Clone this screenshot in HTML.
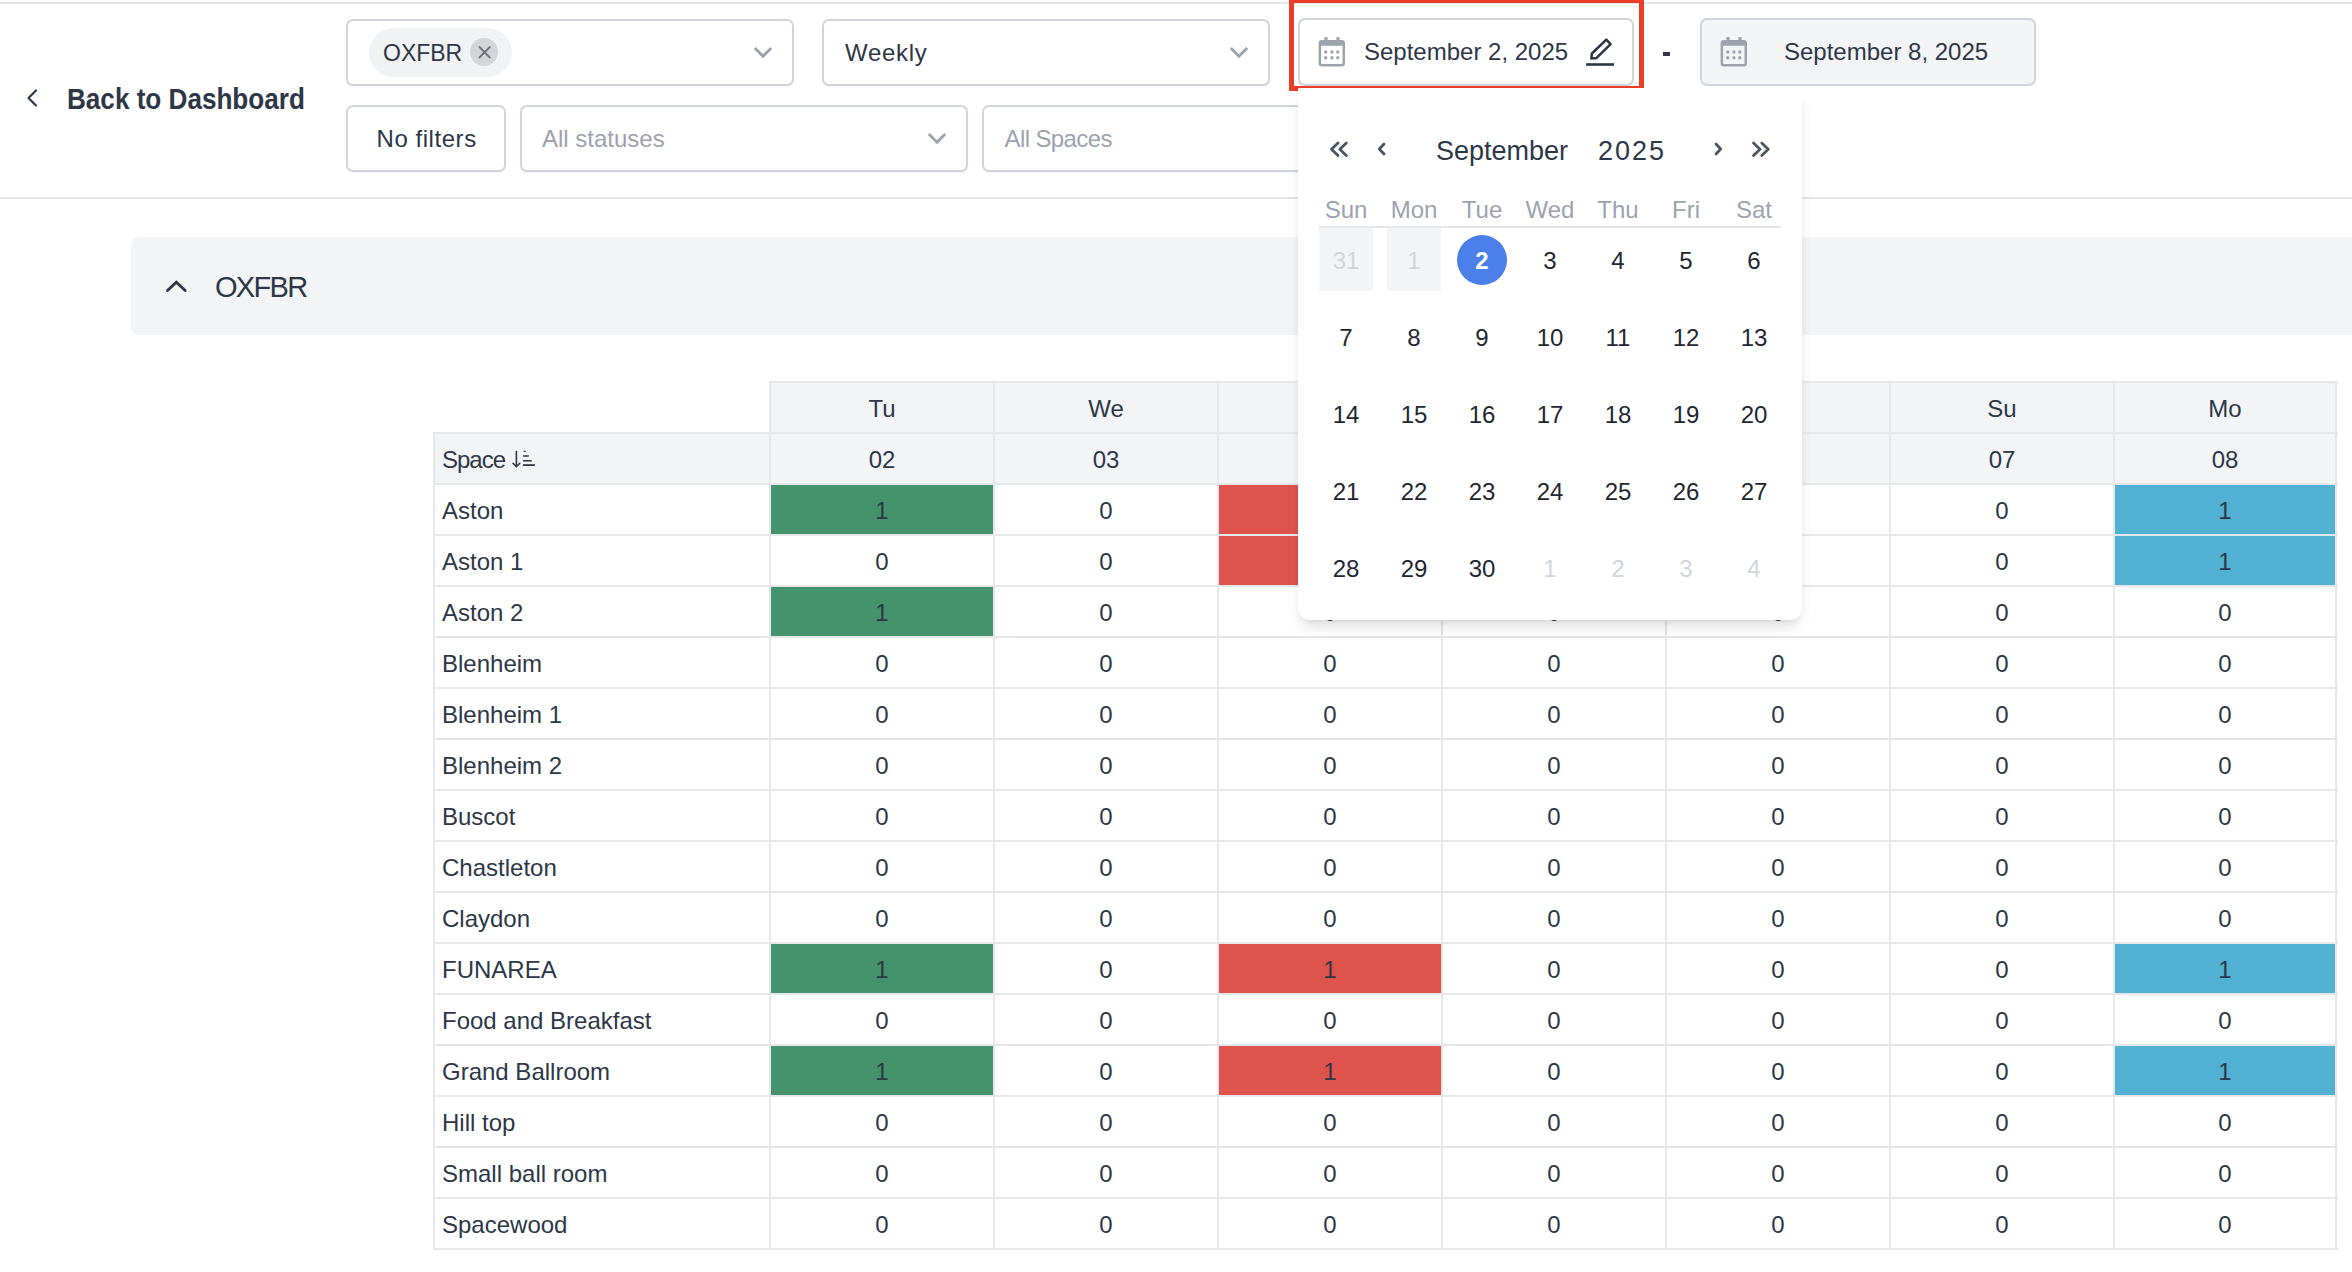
<!DOCTYPE html>
<html><head><meta charset="utf-8"><style>
html,body{margin:0;padding:0;}
body{width:2352px;height:1272px;position:relative;overflow:hidden;background:#fff;font-family:"Liberation Sans",sans-serif;}
.b{position:absolute;}
.t{position:absolute;white-space:nowrap;line-height:0;height:0;}
.t.c{width:400px;text-align:center;}
</style></head><body>
<div class="b" style="left:0px;top:2px;width:2352px;height:2px;background:#e6e7e9"></div>
<div class="b" style="left:0px;top:197px;width:2352px;height:2px;background:#e3e5e8"></div>
<svg class="b" style="left:24px;top:86px" width="18" height="24" viewBox="0 0 18 24"><path d="M12 4.5 L4.5 12 L12 19.5" fill="none" stroke="#2d3748" stroke-width="2.2" stroke-linecap="round" stroke-linejoin="round"/></svg>
<div class="t " style="left:67px;top:98.95px;font-size:29px;color:#2d3748;font-weight:bold;transform:scaleX(0.9);transform-origin:0 0">Back to Dashboard</div>
<div class="b" style="left:346px;top:19px;width:448px;height:67px;border:2px solid #d1d5db;border-radius:7px;background:#fff;box-sizing:border-box;box-shadow:0 1px 2px rgba(0,0,0,0.05)"></div>
<div class="b" style="left:369px;top:28px;width:143px;height:49px;background:#f1f2f4;border-radius:25px"></div>
<div class="t " style="left:383px;top:53.03px;font-size:23px;color:#2d3748;font-weight:normal;">OXFBR</div>
<div class="b" style="left:470px;top:38px;width:28px;height:28px;background:#d3d5d9;border-radius:50%"></div>
<svg class="b" style="left:470px;top:38px" width="28" height="28" viewBox="0 0 28 28"><path d="M9.5 9 L19.8 19.5 M19.8 9 L9.5 19.5" stroke="#6b7280" stroke-width="1.8" stroke-linecap="round"/></svg>
<svg class="b" style="left:751.5px;top:44px" width="22" height="16" viewBox="0 0 22 16"><path d="M2.8 4.1 L11 12.3 L19.2 4.1" fill="none" stroke="#9ca3af" stroke-width="2.8" stroke-linecap="butt" stroke-linejoin="miter"/></svg>
<div class="b" style="left:822px;top:19px;width:448px;height:67px;border:2px solid #d1d5db;border-radius:7px;background:#fff;box-sizing:border-box;box-shadow:0 1px 2px rgba(0,0,0,0.05)"></div>
<div class="t " style="left:845px;top:52.68px;font-size:24px;color:#2d3748;font-weight:normal;letter-spacing:0.7px">Weekly</div>
<svg class="b" style="left:1227.5px;top:44px" width="22" height="16" viewBox="0 0 22 16"><path d="M2.8 4.1 L11 12.3 L19.2 4.1" fill="none" stroke="#9ca3af" stroke-width="2.8" stroke-linecap="butt" stroke-linejoin="miter"/></svg>
<div class="b" style="left:1298px;top:18px;width:336px;height:68px;border:2px solid #d1d5db;border-radius:7px;background:#fff;box-sizing:border-box;box-shadow:0 1px 2px rgba(0,0,0,0.05)"></div>
<svg class="b" style="left:1318px;top:36px" width="30" height="32" viewBox="0 0 30 32">
<rect x="1.85" y="5.25" width="23.9" height="24.1" rx="2" fill="none" stroke="#9ca3af" stroke-width="2.5"/>
<rect x="1.5" y="4.5" width="24.5" height="5.3" rx="1.5" fill="#9ca3af"/>
<rect x="6.3" y="1.1" width="3.3" height="4" fill="#9ca3af"/><rect x="18.4" y="1.1" width="3.2" height="4" fill="#9ca3af"/>
<g fill="#9ca3af"><rect x="6.2" y="14.4" width="3" height="3" rx="0.6"/><rect x="12.4" y="14.4" width="3" height="3" rx="0.6"/><rect x="18.3" y="14.4" width="3" height="3" rx="0.6"/>
<rect x="6.2" y="20.3" width="3" height="3" rx="0.6"/><rect x="12.4" y="20.3" width="3" height="3" rx="0.6"/><rect x="18.3" y="20.3" width="3" height="3" rx="0.6"/></g>
</svg>
<div class="t " style="left:1364px;top:51.68px;font-size:24px;color:#2d3748;font-weight:normal;">September 2, 2025</div>
<svg class="b" style="left:1580px;top:30px" width="40" height="40" viewBox="0 0 40 40"><path d="M11.3 28.6 L11.9 23.5 L26.3 9.6 L30.6 14.1 L16.6 27.9 Z" fill="none" stroke="#2d3748" stroke-width="2.5" stroke-linejoin="round"/><path d="M6.1 34.5 L34 34.5" stroke="#2d3748" stroke-width="2.6"/></svg>
<div class="b" style="left:1289px;top:-2px;width:355px;height:93px;border:5px solid #ea3f26;box-sizing:border-box"></div>
<div class="b" style="left:1663px;top:52px;width:7px;height:4px;background:#2d3748"></div>
<div class="b" style="left:1700px;top:18px;width:336px;height:68px;border:2px solid #d1d5db;border-radius:7px;background:#f3f4f6;box-sizing:border-box"></div>
<svg class="b" style="left:1720px;top:36px" width="30" height="32" viewBox="0 0 30 32">
<rect x="1.85" y="5.25" width="23.9" height="24.1" rx="2" fill="none" stroke="#9ca3af" stroke-width="2.5"/>
<rect x="1.5" y="4.5" width="24.5" height="5.3" rx="1.5" fill="#9ca3af"/>
<rect x="6.3" y="1.1" width="3.3" height="4" fill="#9ca3af"/><rect x="18.4" y="1.1" width="3.2" height="4" fill="#9ca3af"/>
<g fill="#9ca3af"><rect x="6.2" y="14.4" width="3" height="3" rx="0.6"/><rect x="12.4" y="14.4" width="3" height="3" rx="0.6"/><rect x="18.3" y="14.4" width="3" height="3" rx="0.6"/>
<rect x="6.2" y="20.3" width="3" height="3" rx="0.6"/><rect x="12.4" y="20.3" width="3" height="3" rx="0.6"/><rect x="18.3" y="20.3" width="3" height="3" rx="0.6"/></g>
</svg>
<div class="t " style="left:1784px;top:51.68px;font-size:24px;color:#2d3748;font-weight:normal;">September 8, 2025</div>
<div class="b" style="left:346px;top:105px;width:160px;height:67px;border:2px solid #d1d5db;border-radius:7px;background:#fff;box-sizing:border-box;box-shadow:0 1px 2px rgba(0,0,0,0.05)"></div>
<div class="t " style="left:376.5px;top:138.68px;font-size:24px;color:#2d3748;font-weight:normal;letter-spacing:0.55px">No filters</div>
<div class="b" style="left:520px;top:105px;width:448px;height:67px;border:2px solid #d1d5db;border-radius:7px;background:#fff;box-sizing:border-box;box-shadow:0 1px 2px rgba(0,0,0,0.05)"></div>
<div class="t " style="left:542px;top:138.68px;font-size:24px;color:#9ca3af;font-weight:normal;">All statuses</div>
<svg class="b" style="left:925.5px;top:130px" width="22" height="16" viewBox="0 0 22 16"><path d="M2.8 4.1 L11 12.3 L19.2 4.1" fill="none" stroke="#9ca3af" stroke-width="2.8" stroke-linecap="butt" stroke-linejoin="miter"/></svg>
<div class="b" style="left:982px;top:105px;width:448px;height:67px;border:2px solid #d1d5db;border-radius:7px;background:#fff;box-sizing:border-box;box-shadow:0 1px 2px rgba(0,0,0,0.05)"></div>
<div class="t " style="left:1004.5px;top:138.68px;font-size:24px;color:#9ca3af;font-weight:normal;letter-spacing:-0.6px">All Spaces</div>
<div class="b" style="left:131px;top:237px;width:2240px;height:98px;background:#f3f4f6;border-radius:8px"></div>
<svg class="b" style="left:160px;top:274px" width="32" height="26" viewBox="0 0 32 26"><path d="M7.5 16.5 L16.3 8.3 L25.2 16.5" fill="none" stroke="#2d3748" stroke-width="2.9" stroke-linecap="round" stroke-linejoin="miter"/></svg>
<div class="t " style="left:215px;top:287.45px;font-size:29px;color:#2d3748;font-weight:normal;letter-spacing:-1.7px">OXFBR</div>
<div class="b" style="left:769px;top:381px;width:1567px;height:52px;background:#f3f4f6"></div>
<div class="b" style="left:433px;top:432px;width:1903px;height:52px;background:#f3f4f6"></div>
<div class="b" style="left:771px;top:485px;width:222px;height:50px;background:#44936c"></div>
<div class="b" style="left:1219px;top:485px;width:222px;height:50px;background:#df534d"></div>
<div class="b" style="left:2115px;top:485px;width:220px;height:50px;background:#52b0d3"></div>
<div class="b" style="left:1219px;top:536px;width:222px;height:50px;background:#df534d"></div>
<div class="b" style="left:2115px;top:536px;width:220px;height:50px;background:#52b0d3"></div>
<div class="b" style="left:771px;top:587px;width:222px;height:50px;background:#44936c"></div>
<div class="b" style="left:771px;top:944px;width:222px;height:50px;background:#44936c"></div>
<div class="b" style="left:1219px;top:944px;width:222px;height:50px;background:#df534d"></div>
<div class="b" style="left:2115px;top:944px;width:220px;height:50px;background:#52b0d3"></div>
<div class="b" style="left:771px;top:1046px;width:222px;height:50px;background:#44936c"></div>
<div class="b" style="left:1219px;top:1046px;width:222px;height:50px;background:#df534d"></div>
<div class="b" style="left:2115px;top:1046px;width:220px;height:50px;background:#52b0d3"></div>
<div class="b" style="left:769px;top:381px;width:1569px;height:2px;background:#e5e7eb"></div>
<div class="b" style="left:433px;top:432px;width:1905px;height:2px;background:#e5e7eb"></div>
<div class="b" style="left:433px;top:483px;width:1905px;height:2px;background:#e5e7eb"></div>
<div class="b" style="left:433px;top:534px;width:1905px;height:2px;background:#e5e7eb"></div>
<div class="b" style="left:433px;top:585px;width:1905px;height:2px;background:#e5e7eb"></div>
<div class="b" style="left:433px;top:636px;width:1905px;height:2px;background:#e5e7eb"></div>
<div class="b" style="left:433px;top:687px;width:1905px;height:2px;background:#e5e7eb"></div>
<div class="b" style="left:433px;top:738px;width:1905px;height:2px;background:#e5e7eb"></div>
<div class="b" style="left:433px;top:789px;width:1905px;height:2px;background:#e5e7eb"></div>
<div class="b" style="left:433px;top:840px;width:1905px;height:2px;background:#e5e7eb"></div>
<div class="b" style="left:433px;top:891px;width:1905px;height:2px;background:#e5e7eb"></div>
<div class="b" style="left:433px;top:942px;width:1905px;height:2px;background:#e5e7eb"></div>
<div class="b" style="left:433px;top:993px;width:1905px;height:2px;background:#e5e7eb"></div>
<div class="b" style="left:433px;top:1044px;width:1905px;height:2px;background:#e5e7eb"></div>
<div class="b" style="left:433px;top:1095px;width:1905px;height:2px;background:#e5e7eb"></div>
<div class="b" style="left:433px;top:1146px;width:1905px;height:2px;background:#e5e7eb"></div>
<div class="b" style="left:433px;top:1197px;width:1905px;height:2px;background:#e5e7eb"></div>
<div class="b" style="left:433px;top:1248px;width:1905px;height:2px;background:#e5e7eb"></div>
<div class="b" style="left:433px;top:432px;width:2px;height:818px;background:#e5e7eb"></div>
<div class="b" style="left:769px;top:381px;width:2px;height:869px;background:#e5e7eb"></div>
<div class="b" style="left:993px;top:381px;width:2px;height:869px;background:#e5e7eb"></div>
<div class="b" style="left:1217px;top:381px;width:2px;height:869px;background:#e5e7eb"></div>
<div class="b" style="left:1441px;top:381px;width:2px;height:869px;background:#e5e7eb"></div>
<div class="b" style="left:1665px;top:381px;width:2px;height:869px;background:#e5e7eb"></div>
<div class="b" style="left:1889px;top:381px;width:2px;height:869px;background:#e5e7eb"></div>
<div class="b" style="left:2113px;top:381px;width:2px;height:869px;background:#e5e7eb"></div>
<div class="b" style="left:2335px;top:381px;width:2px;height:869px;background:#e5e7eb"></div>
<div class="t c" style="left:682.0px;top:408.68px;font-size:24px;color:#2d3748;font-weight:normal;">Tu</div>
<div class="t c" style="left:682.0px;top:459.68px;font-size:24px;color:#2d3748;font-weight:normal;">02</div>
<div class="t c" style="left:906.0px;top:408.68px;font-size:24px;color:#2d3748;font-weight:normal;">We</div>
<div class="t c" style="left:906.0px;top:459.68px;font-size:24px;color:#2d3748;font-weight:normal;">03</div>
<div class="t c" style="left:1130.0px;top:408.68px;font-size:24px;color:#2d3748;font-weight:normal;">Th</div>
<div class="t c" style="left:1130.0px;top:459.68px;font-size:24px;color:#2d3748;font-weight:normal;">04</div>
<div class="t c" style="left:1354.0px;top:408.68px;font-size:24px;color:#2d3748;font-weight:normal;">Fr</div>
<div class="t c" style="left:1354.0px;top:459.68px;font-size:24px;color:#2d3748;font-weight:normal;">05</div>
<div class="t c" style="left:1578.0px;top:408.68px;font-size:24px;color:#2d3748;font-weight:normal;">Sa</div>
<div class="t c" style="left:1578.0px;top:459.68px;font-size:24px;color:#2d3748;font-weight:normal;">06</div>
<div class="t c" style="left:1802.0px;top:408.68px;font-size:24px;color:#2d3748;font-weight:normal;">Su</div>
<div class="t c" style="left:1802.0px;top:459.68px;font-size:24px;color:#2d3748;font-weight:normal;">07</div>
<div class="t c" style="left:2025.0px;top:408.68px;font-size:24px;color:#2d3748;font-weight:normal;">Mo</div>
<div class="t c" style="left:2025.0px;top:459.68px;font-size:24px;color:#2d3748;font-weight:normal;">08</div>
<div class="t " style="left:442px;top:459.68px;font-size:24px;color:#2d3748;font-weight:normal;letter-spacing:-1px">Space</div>
<svg class="b" style="left:505px;top:445px" width="35" height="28" viewBox="0 0 35 28"><path d="M11.4 6.5 L11.4 21.5 M8 18.3 L11.4 21.8 L14.8 18.3" fill="none" stroke="#2d3748" stroke-width="1.6" stroke-linecap="round" stroke-linejoin="round"/><path d="M18.6 6.4 L20.8 6.4 M18 11 L23.8 11 M18 15.7 L26.8 15.7" stroke="#2d3748" stroke-width="1.4"/><path d="M18 20.1 L29.8 20.1" stroke="#2d3748" stroke-width="1.8"/></svg>
<div class="t " style="left:442px;top:510.68px;font-size:24px;color:#2d3748;font-weight:normal;">Aston</div>
<div class="t c" style="left:682.0px;top:510.68px;font-size:24px;color:#2d3748;font-weight:normal;">1</div>
<div class="t c" style="left:906.0px;top:510.68px;font-size:24px;color:#2d3748;font-weight:normal;">0</div>
<div class="t c" style="left:1130.0px;top:510.68px;font-size:24px;color:#2d3748;font-weight:normal;">1</div>
<div class="t c" style="left:1354.0px;top:510.68px;font-size:24px;color:#2d3748;font-weight:normal;">0</div>
<div class="t c" style="left:1578.0px;top:510.68px;font-size:24px;color:#2d3748;font-weight:normal;">0</div>
<div class="t c" style="left:1802.0px;top:510.68px;font-size:24px;color:#2d3748;font-weight:normal;">0</div>
<div class="t c" style="left:2025.0px;top:510.68px;font-size:24px;color:#2d3748;font-weight:normal;">1</div>
<div class="t " style="left:442px;top:561.68px;font-size:24px;color:#2d3748;font-weight:normal;">Aston 1</div>
<div class="t c" style="left:682.0px;top:561.68px;font-size:24px;color:#2d3748;font-weight:normal;">0</div>
<div class="t c" style="left:906.0px;top:561.68px;font-size:24px;color:#2d3748;font-weight:normal;">0</div>
<div class="t c" style="left:1130.0px;top:561.68px;font-size:24px;color:#2d3748;font-weight:normal;">1</div>
<div class="t c" style="left:1354.0px;top:561.68px;font-size:24px;color:#2d3748;font-weight:normal;">0</div>
<div class="t c" style="left:1578.0px;top:561.68px;font-size:24px;color:#2d3748;font-weight:normal;">0</div>
<div class="t c" style="left:1802.0px;top:561.68px;font-size:24px;color:#2d3748;font-weight:normal;">0</div>
<div class="t c" style="left:2025.0px;top:561.68px;font-size:24px;color:#2d3748;font-weight:normal;">1</div>
<div class="t " style="left:442px;top:612.68px;font-size:24px;color:#2d3748;font-weight:normal;">Aston 2</div>
<div class="t c" style="left:682.0px;top:612.68px;font-size:24px;color:#2d3748;font-weight:normal;">1</div>
<div class="t c" style="left:906.0px;top:612.68px;font-size:24px;color:#2d3748;font-weight:normal;">0</div>
<div class="t c" style="left:1130.0px;top:612.68px;font-size:24px;color:#2d3748;font-weight:normal;">0</div>
<div class="t c" style="left:1354.0px;top:612.68px;font-size:24px;color:#2d3748;font-weight:normal;">0</div>
<div class="t c" style="left:1578.0px;top:612.68px;font-size:24px;color:#2d3748;font-weight:normal;">0</div>
<div class="t c" style="left:1802.0px;top:612.68px;font-size:24px;color:#2d3748;font-weight:normal;">0</div>
<div class="t c" style="left:2025.0px;top:612.68px;font-size:24px;color:#2d3748;font-weight:normal;">0</div>
<div class="t " style="left:442px;top:663.68px;font-size:24px;color:#2d3748;font-weight:normal;">Blenheim</div>
<div class="t c" style="left:682.0px;top:663.68px;font-size:24px;color:#2d3748;font-weight:normal;">0</div>
<div class="t c" style="left:906.0px;top:663.68px;font-size:24px;color:#2d3748;font-weight:normal;">0</div>
<div class="t c" style="left:1130.0px;top:663.68px;font-size:24px;color:#2d3748;font-weight:normal;">0</div>
<div class="t c" style="left:1354.0px;top:663.68px;font-size:24px;color:#2d3748;font-weight:normal;">0</div>
<div class="t c" style="left:1578.0px;top:663.68px;font-size:24px;color:#2d3748;font-weight:normal;">0</div>
<div class="t c" style="left:1802.0px;top:663.68px;font-size:24px;color:#2d3748;font-weight:normal;">0</div>
<div class="t c" style="left:2025.0px;top:663.68px;font-size:24px;color:#2d3748;font-weight:normal;">0</div>
<div class="t " style="left:442px;top:714.68px;font-size:24px;color:#2d3748;font-weight:normal;">Blenheim 1</div>
<div class="t c" style="left:682.0px;top:714.68px;font-size:24px;color:#2d3748;font-weight:normal;">0</div>
<div class="t c" style="left:906.0px;top:714.68px;font-size:24px;color:#2d3748;font-weight:normal;">0</div>
<div class="t c" style="left:1130.0px;top:714.68px;font-size:24px;color:#2d3748;font-weight:normal;">0</div>
<div class="t c" style="left:1354.0px;top:714.68px;font-size:24px;color:#2d3748;font-weight:normal;">0</div>
<div class="t c" style="left:1578.0px;top:714.68px;font-size:24px;color:#2d3748;font-weight:normal;">0</div>
<div class="t c" style="left:1802.0px;top:714.68px;font-size:24px;color:#2d3748;font-weight:normal;">0</div>
<div class="t c" style="left:2025.0px;top:714.68px;font-size:24px;color:#2d3748;font-weight:normal;">0</div>
<div class="t " style="left:442px;top:765.68px;font-size:24px;color:#2d3748;font-weight:normal;">Blenheim 2</div>
<div class="t c" style="left:682.0px;top:765.68px;font-size:24px;color:#2d3748;font-weight:normal;">0</div>
<div class="t c" style="left:906.0px;top:765.68px;font-size:24px;color:#2d3748;font-weight:normal;">0</div>
<div class="t c" style="left:1130.0px;top:765.68px;font-size:24px;color:#2d3748;font-weight:normal;">0</div>
<div class="t c" style="left:1354.0px;top:765.68px;font-size:24px;color:#2d3748;font-weight:normal;">0</div>
<div class="t c" style="left:1578.0px;top:765.68px;font-size:24px;color:#2d3748;font-weight:normal;">0</div>
<div class="t c" style="left:1802.0px;top:765.68px;font-size:24px;color:#2d3748;font-weight:normal;">0</div>
<div class="t c" style="left:2025.0px;top:765.68px;font-size:24px;color:#2d3748;font-weight:normal;">0</div>
<div class="t " style="left:442px;top:816.68px;font-size:24px;color:#2d3748;font-weight:normal;">Buscot</div>
<div class="t c" style="left:682.0px;top:816.68px;font-size:24px;color:#2d3748;font-weight:normal;">0</div>
<div class="t c" style="left:906.0px;top:816.68px;font-size:24px;color:#2d3748;font-weight:normal;">0</div>
<div class="t c" style="left:1130.0px;top:816.68px;font-size:24px;color:#2d3748;font-weight:normal;">0</div>
<div class="t c" style="left:1354.0px;top:816.68px;font-size:24px;color:#2d3748;font-weight:normal;">0</div>
<div class="t c" style="left:1578.0px;top:816.68px;font-size:24px;color:#2d3748;font-weight:normal;">0</div>
<div class="t c" style="left:1802.0px;top:816.68px;font-size:24px;color:#2d3748;font-weight:normal;">0</div>
<div class="t c" style="left:2025.0px;top:816.68px;font-size:24px;color:#2d3748;font-weight:normal;">0</div>
<div class="t " style="left:442px;top:867.68px;font-size:24px;color:#2d3748;font-weight:normal;">Chastleton</div>
<div class="t c" style="left:682.0px;top:867.68px;font-size:24px;color:#2d3748;font-weight:normal;">0</div>
<div class="t c" style="left:906.0px;top:867.68px;font-size:24px;color:#2d3748;font-weight:normal;">0</div>
<div class="t c" style="left:1130.0px;top:867.68px;font-size:24px;color:#2d3748;font-weight:normal;">0</div>
<div class="t c" style="left:1354.0px;top:867.68px;font-size:24px;color:#2d3748;font-weight:normal;">0</div>
<div class="t c" style="left:1578.0px;top:867.68px;font-size:24px;color:#2d3748;font-weight:normal;">0</div>
<div class="t c" style="left:1802.0px;top:867.68px;font-size:24px;color:#2d3748;font-weight:normal;">0</div>
<div class="t c" style="left:2025.0px;top:867.68px;font-size:24px;color:#2d3748;font-weight:normal;">0</div>
<div class="t " style="left:442px;top:918.68px;font-size:24px;color:#2d3748;font-weight:normal;">Claydon</div>
<div class="t c" style="left:682.0px;top:918.68px;font-size:24px;color:#2d3748;font-weight:normal;">0</div>
<div class="t c" style="left:906.0px;top:918.68px;font-size:24px;color:#2d3748;font-weight:normal;">0</div>
<div class="t c" style="left:1130.0px;top:918.68px;font-size:24px;color:#2d3748;font-weight:normal;">0</div>
<div class="t c" style="left:1354.0px;top:918.68px;font-size:24px;color:#2d3748;font-weight:normal;">0</div>
<div class="t c" style="left:1578.0px;top:918.68px;font-size:24px;color:#2d3748;font-weight:normal;">0</div>
<div class="t c" style="left:1802.0px;top:918.68px;font-size:24px;color:#2d3748;font-weight:normal;">0</div>
<div class="t c" style="left:2025.0px;top:918.68px;font-size:24px;color:#2d3748;font-weight:normal;">0</div>
<div class="t " style="left:442px;top:969.68px;font-size:24px;color:#2d3748;font-weight:normal;">FUNAREA</div>
<div class="t c" style="left:682.0px;top:969.68px;font-size:24px;color:#2d3748;font-weight:normal;">1</div>
<div class="t c" style="left:906.0px;top:969.68px;font-size:24px;color:#2d3748;font-weight:normal;">0</div>
<div class="t c" style="left:1130.0px;top:969.68px;font-size:24px;color:#2d3748;font-weight:normal;">1</div>
<div class="t c" style="left:1354.0px;top:969.68px;font-size:24px;color:#2d3748;font-weight:normal;">0</div>
<div class="t c" style="left:1578.0px;top:969.68px;font-size:24px;color:#2d3748;font-weight:normal;">0</div>
<div class="t c" style="left:1802.0px;top:969.68px;font-size:24px;color:#2d3748;font-weight:normal;">0</div>
<div class="t c" style="left:2025.0px;top:969.68px;font-size:24px;color:#2d3748;font-weight:normal;">1</div>
<div class="t " style="left:442px;top:1020.68px;font-size:24px;color:#2d3748;font-weight:normal;">Food and Breakfast</div>
<div class="t c" style="left:682.0px;top:1020.68px;font-size:24px;color:#2d3748;font-weight:normal;">0</div>
<div class="t c" style="left:906.0px;top:1020.68px;font-size:24px;color:#2d3748;font-weight:normal;">0</div>
<div class="t c" style="left:1130.0px;top:1020.68px;font-size:24px;color:#2d3748;font-weight:normal;">0</div>
<div class="t c" style="left:1354.0px;top:1020.68px;font-size:24px;color:#2d3748;font-weight:normal;">0</div>
<div class="t c" style="left:1578.0px;top:1020.68px;font-size:24px;color:#2d3748;font-weight:normal;">0</div>
<div class="t c" style="left:1802.0px;top:1020.68px;font-size:24px;color:#2d3748;font-weight:normal;">0</div>
<div class="t c" style="left:2025.0px;top:1020.68px;font-size:24px;color:#2d3748;font-weight:normal;">0</div>
<div class="t " style="left:442px;top:1071.68px;font-size:24px;color:#2d3748;font-weight:normal;">Grand Ballroom</div>
<div class="t c" style="left:682.0px;top:1071.68px;font-size:24px;color:#2d3748;font-weight:normal;">1</div>
<div class="t c" style="left:906.0px;top:1071.68px;font-size:24px;color:#2d3748;font-weight:normal;">0</div>
<div class="t c" style="left:1130.0px;top:1071.68px;font-size:24px;color:#2d3748;font-weight:normal;">1</div>
<div class="t c" style="left:1354.0px;top:1071.68px;font-size:24px;color:#2d3748;font-weight:normal;">0</div>
<div class="t c" style="left:1578.0px;top:1071.68px;font-size:24px;color:#2d3748;font-weight:normal;">0</div>
<div class="t c" style="left:1802.0px;top:1071.68px;font-size:24px;color:#2d3748;font-weight:normal;">0</div>
<div class="t c" style="left:2025.0px;top:1071.68px;font-size:24px;color:#2d3748;font-weight:normal;">1</div>
<div class="t " style="left:442px;top:1122.68px;font-size:24px;color:#2d3748;font-weight:normal;">Hill top</div>
<div class="t c" style="left:682.0px;top:1122.68px;font-size:24px;color:#2d3748;font-weight:normal;">0</div>
<div class="t c" style="left:906.0px;top:1122.68px;font-size:24px;color:#2d3748;font-weight:normal;">0</div>
<div class="t c" style="left:1130.0px;top:1122.68px;font-size:24px;color:#2d3748;font-weight:normal;">0</div>
<div class="t c" style="left:1354.0px;top:1122.68px;font-size:24px;color:#2d3748;font-weight:normal;">0</div>
<div class="t c" style="left:1578.0px;top:1122.68px;font-size:24px;color:#2d3748;font-weight:normal;">0</div>
<div class="t c" style="left:1802.0px;top:1122.68px;font-size:24px;color:#2d3748;font-weight:normal;">0</div>
<div class="t c" style="left:2025.0px;top:1122.68px;font-size:24px;color:#2d3748;font-weight:normal;">0</div>
<div class="t " style="left:442px;top:1173.68px;font-size:24px;color:#2d3748;font-weight:normal;">Small ball room</div>
<div class="t c" style="left:682.0px;top:1173.68px;font-size:24px;color:#2d3748;font-weight:normal;">0</div>
<div class="t c" style="left:906.0px;top:1173.68px;font-size:24px;color:#2d3748;font-weight:normal;">0</div>
<div class="t c" style="left:1130.0px;top:1173.68px;font-size:24px;color:#2d3748;font-weight:normal;">0</div>
<div class="t c" style="left:1354.0px;top:1173.68px;font-size:24px;color:#2d3748;font-weight:normal;">0</div>
<div class="t c" style="left:1578.0px;top:1173.68px;font-size:24px;color:#2d3748;font-weight:normal;">0</div>
<div class="t c" style="left:1802.0px;top:1173.68px;font-size:24px;color:#2d3748;font-weight:normal;">0</div>
<div class="t c" style="left:2025.0px;top:1173.68px;font-size:24px;color:#2d3748;font-weight:normal;">0</div>
<div class="t " style="left:442px;top:1224.68px;font-size:24px;color:#2d3748;font-weight:normal;">Spacewood</div>
<div class="t c" style="left:682.0px;top:1224.68px;font-size:24px;color:#2d3748;font-weight:normal;">0</div>
<div class="t c" style="left:906.0px;top:1224.68px;font-size:24px;color:#2d3748;font-weight:normal;">0</div>
<div class="t c" style="left:1130.0px;top:1224.68px;font-size:24px;color:#2d3748;font-weight:normal;">0</div>
<div class="t c" style="left:1354.0px;top:1224.68px;font-size:24px;color:#2d3748;font-weight:normal;">0</div>
<div class="t c" style="left:1578.0px;top:1224.68px;font-size:24px;color:#2d3748;font-weight:normal;">0</div>
<div class="t c" style="left:1802.0px;top:1224.68px;font-size:24px;color:#2d3748;font-weight:normal;">0</div>
<div class="t c" style="left:2025.0px;top:1224.68px;font-size:24px;color:#2d3748;font-weight:normal;">0</div>
<div class="b" style="left:1298px;top:88px;width:504px;height:532px;background:#fff;border-radius:0 0 12px 12px;box-shadow:0 10px 15px -3px rgba(0,0,0,0.12), 0 4px 6px -4px rgba(0,0,0,0.1)"></div>
<svg class="b" style="left:1326px;top:136px" width="26" height="26" viewBox="0 0 26 26"><path d="M12 7 L5.5 13.3 L12 19.6 M20.3 7 L13.8 13.3 L20.3 19.6" fill="none" stroke="#4b5563" stroke-width="2.8" stroke-linecap="round" stroke-linejoin="round"/></svg>
<svg class="b" style="left:1372px;top:136px" width="20" height="26" viewBox="0 0 20 26"><path d="M12 8 L7.3 13 L12 18" fill="none" stroke="#4b5563" stroke-width="2.8" stroke-linecap="round" stroke-linejoin="round"/></svg>
<svg class="b" style="left:1708px;top:136px" width="20" height="26" viewBox="0 0 20 26"><path d="M8 8 L12.7 13 L8 18" fill="none" stroke="#4b5563" stroke-width="2.8" stroke-linecap="round" stroke-linejoin="round"/></svg>
<svg class="b" style="left:1748px;top:136px" width="26" height="26" viewBox="0 0 26 26"><path d="M5.5 7 L12 13.3 L5.5 19.6 M13.8 7 L20.3 13.3 L13.8 19.6" fill="none" stroke="#4b5563" stroke-width="2.8" stroke-linecap="round" stroke-linejoin="round"/></svg>
<div class="t " style="left:1436px;top:150.64px;font-size:27px;color:#2d3748;font-weight:normal;">September</div>
<div class="t " style="left:1598px;top:150.64px;font-size:27px;color:#2d3748;font-weight:normal;letter-spacing:2px">2025</div>
<div class="t c" style="left:1146px;top:209.68px;font-size:24px;color:#9ca3af;font-weight:normal;">Sun</div>
<div class="t c" style="left:1214px;top:209.68px;font-size:24px;color:#9ca3af;font-weight:normal;">Mon</div>
<div class="t c" style="left:1282px;top:209.68px;font-size:24px;color:#9ca3af;font-weight:normal;">Tue</div>
<div class="t c" style="left:1350px;top:209.68px;font-size:24px;color:#9ca3af;font-weight:normal;">Wed</div>
<div class="t c" style="left:1418px;top:209.68px;font-size:24px;color:#9ca3af;font-weight:normal;">Thu</div>
<div class="t c" style="left:1486px;top:209.68px;font-size:24px;color:#9ca3af;font-weight:normal;">Fri</div>
<div class="t c" style="left:1554px;top:209.68px;font-size:24px;color:#9ca3af;font-weight:normal;">Sat</div>
<div class="b" style="left:1319px;top:226px;width:462px;height:2px;background:#e5e7eb"></div>
<div class="b" style="left:1319px;top:228px;width:54px;height:63px;background:#f3f4f6"></div>
<div class="t c" style="left:1146px;top:260.68px;font-size:24px;color:#d1d5db;font-weight:normal;">31</div>
<div class="b" style="left:1387px;top:228px;width:54px;height:63px;background:#f3f4f6"></div>
<div class="t c" style="left:1214px;top:260.68px;font-size:24px;color:#d1d5db;font-weight:normal;">1</div>
<div class="b" style="left:1457px;top:235px;width:50px;height:50px;background:#4b7fe9;border-radius:50%"></div>
<div class="t c" style="left:1282px;top:260.68px;font-size:24px;color:#fff;font-weight:bold;">2</div>
<div class="t c" style="left:1350px;top:260.68px;font-size:24px;color:#1f2733;font-weight:normal;">3</div>
<div class="t c" style="left:1418px;top:260.68px;font-size:24px;color:#1f2733;font-weight:normal;">4</div>
<div class="t c" style="left:1486px;top:260.68px;font-size:24px;color:#1f2733;font-weight:normal;">5</div>
<div class="t c" style="left:1554px;top:260.68px;font-size:24px;color:#1f2733;font-weight:normal;">6</div>
<div class="t c" style="left:1146px;top:337.68px;font-size:24px;color:#1f2733;font-weight:normal;">7</div>
<div class="t c" style="left:1214px;top:337.68px;font-size:24px;color:#1f2733;font-weight:normal;">8</div>
<div class="t c" style="left:1282px;top:337.68px;font-size:24px;color:#1f2733;font-weight:normal;">9</div>
<div class="t c" style="left:1350px;top:337.68px;font-size:24px;color:#1f2733;font-weight:normal;">10</div>
<div class="t c" style="left:1418px;top:337.68px;font-size:24px;color:#1f2733;font-weight:normal;">11</div>
<div class="t c" style="left:1486px;top:337.68px;font-size:24px;color:#1f2733;font-weight:normal;">12</div>
<div class="t c" style="left:1554px;top:337.68px;font-size:24px;color:#1f2733;font-weight:normal;">13</div>
<div class="t c" style="left:1146px;top:414.68px;font-size:24px;color:#1f2733;font-weight:normal;">14</div>
<div class="t c" style="left:1214px;top:414.68px;font-size:24px;color:#1f2733;font-weight:normal;">15</div>
<div class="t c" style="left:1282px;top:414.68px;font-size:24px;color:#1f2733;font-weight:normal;">16</div>
<div class="t c" style="left:1350px;top:414.68px;font-size:24px;color:#1f2733;font-weight:normal;">17</div>
<div class="t c" style="left:1418px;top:414.68px;font-size:24px;color:#1f2733;font-weight:normal;">18</div>
<div class="t c" style="left:1486px;top:414.68px;font-size:24px;color:#1f2733;font-weight:normal;">19</div>
<div class="t c" style="left:1554px;top:414.68px;font-size:24px;color:#1f2733;font-weight:normal;">20</div>
<div class="t c" style="left:1146px;top:491.68px;font-size:24px;color:#1f2733;font-weight:normal;">21</div>
<div class="t c" style="left:1214px;top:491.68px;font-size:24px;color:#1f2733;font-weight:normal;">22</div>
<div class="t c" style="left:1282px;top:491.68px;font-size:24px;color:#1f2733;font-weight:normal;">23</div>
<div class="t c" style="left:1350px;top:491.68px;font-size:24px;color:#1f2733;font-weight:normal;">24</div>
<div class="t c" style="left:1418px;top:491.68px;font-size:24px;color:#1f2733;font-weight:normal;">25</div>
<div class="t c" style="left:1486px;top:491.68px;font-size:24px;color:#1f2733;font-weight:normal;">26</div>
<div class="t c" style="left:1554px;top:491.68px;font-size:24px;color:#1f2733;font-weight:normal;">27</div>
<div class="t c" style="left:1146px;top:568.68px;font-size:24px;color:#1f2733;font-weight:normal;">28</div>
<div class="t c" style="left:1214px;top:568.68px;font-size:24px;color:#1f2733;font-weight:normal;">29</div>
<div class="t c" style="left:1282px;top:568.68px;font-size:24px;color:#1f2733;font-weight:normal;">30</div>
<div class="t c" style="left:1350px;top:568.68px;font-size:24px;color:#d1d5db;font-weight:normal;">1</div>
<div class="t c" style="left:1418px;top:568.68px;font-size:24px;color:#d1d5db;font-weight:normal;">2</div>
<div class="t c" style="left:1486px;top:568.68px;font-size:24px;color:#d1d5db;font-weight:normal;">3</div>
<div class="t c" style="left:1554px;top:568.68px;font-size:24px;color:#d1d5db;font-weight:normal;">4</div>
</body></html>
